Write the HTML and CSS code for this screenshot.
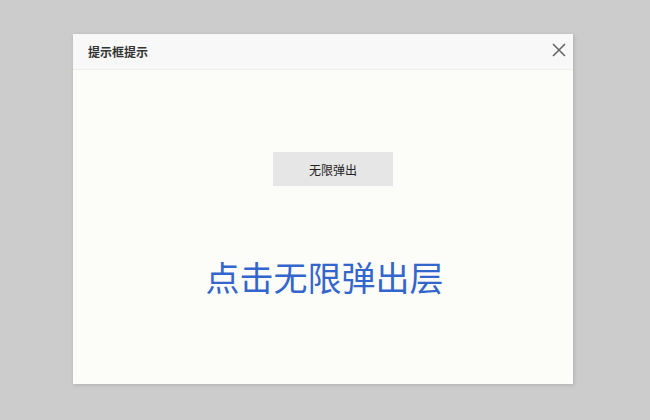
FILE: index.html
```html
<!DOCTYPE html>
<html lang="zh">
<head>
<meta charset="utf-8">
<title>提示框提示</title>
<link rel="stylesheet" href="styles.css">
</head>
<body>
<div class="dialog">
  <div class="dialog-header">
    <span class="dialog-title">提示框提示</span>
    <span class="dialog-close" aria-label="关闭">
      <svg width="14" height="14" viewBox="0 0 14 14"><path d="M1 1L13 13M13 1L1 13" stroke="#666" stroke-width="1.6" fill="none"/></svg>
    </span>
  </div>
  <div class="dialog-body">
    <button class="btn">无限弹出</button>
    <div class="big-link">点击无限弹出层</div>
  </div>
</div>
</body>
</html>
```
FILE: styles.css
```css
html, body {
  margin: 0;
  padding: 0;
}
body {
  background: #cccccc;
  width: 650px;
  height: 420px;
  font-family: "Microsoft YaHei", "Noto Sans CJK SC", sans-serif;
  padding-top: 34px;
  padding-left: 73px;
  box-sizing: border-box;
}
.dialog {
  width: 500px;
  height: 350px;
  background: #fcfcf9;
  box-shadow: 1px 1px 4px rgba(0,0,0,0.15);
  display: flex;
  flex-direction: column;
}
.dialog-header {
  height: 35px;
  background: #f8f8f8;
  border-bottom: 1px solid #eeeeee;
  display: flex;
  align-items: center;
  justify-content: space-between;
  padding: 0 7px 0 15px;
  box-sizing: content-box;
}
.dialog-title {
  font-size: 12px;
  color: #333;
  font-weight: bold;
}
.dialog-close {
  display: flex;
  width: 14px;
  height: 14px;
  margin-top: -3px;
}
.dialog-body {
  flex: 1;
  display: flex;
  flex-direction: column;
  align-items: center;
  padding-top: 82px;
}
.btn {
  width: 120px;
  height: 34px;
  border: none;
  background: #e6e6e6;
  font-family: inherit;
  font-size: 12px;
  color: #222;
  padding: 0;
  margin-left: 20px;
}
.big-link {
  margin-top: 68px;
  font-size: 34px;
  line-height: 46px;
  color: #3366cc;
  margin-left: 3px;
}
```
